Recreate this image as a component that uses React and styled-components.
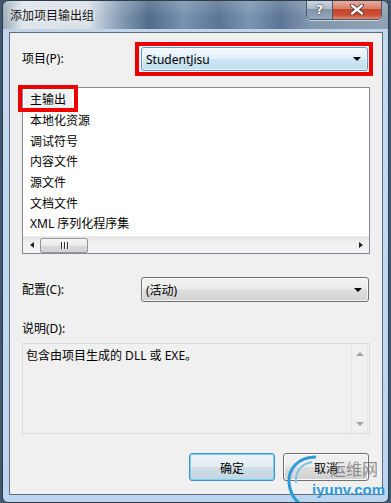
import React from "react";
import styled, { createGlobalStyle } from "styled-components";

const GlobalStyle = createGlobalStyle`
  html, body {
    margin: 0;
    padding: 0;
    background: #41576f;
  }
  body {
    font-family: "Noto Sans", "Noto Sans CJK SC", sans-serif;
    font-size: 12px;
    color: #000;
  }
  * { box-sizing: border-box; }
`;

const items = ["主输出", "本地化资源", "调试符号", "内容文件", "源文件", "文档文件", "XML 序列化程序集"];

export default function App() {
  return (
    <>
      <GlobalStyle />
      <Window>
        <TitleBar>
          <Caption>添加项目输出组</Caption>
          <CaptionButtons>
            <HelpButton>?</HelpButton>
            <CloseButton>
              <svg width="14" height="11" viewBox="0 0 14 11">
                <path d="M2 1.5 L12 9.5 M12 1.5 L2 9.5" stroke="#3a2a28" strokeWidth="4" strokeLinecap="round" />
                <path d="M2 1.5 L12 9.5 M12 1.5 L2 9.5" stroke="#fff" strokeWidth="2.4" strokeLinecap="round" />
              </svg>
            </CloseButton>
          </CaptionButtons>
        </TitleBar>

        <Client>
          <FieldRow>
            <Label $width={113}>项目(P):</Label>
            <Highlight>
              <Combo $focused>
                <span>StudentJisu</span>
                <Arrow />
              </Combo>
            </Highlight>
          </FieldRow>

          <ListBox>
            <ListItems>
              {items.map((t, i) => (
                <ListItem key={t}>
                  <ItemText $selected={i === 0}>{t}</ItemText>
                </ListItem>
              ))}
            </ListItems>
            <ItemMark />
            <HScroll>
              <ScrollArrow $dir="left" />
              <Track>
                <Thumb>
                  <Grip />
                  <Grip />
                  <Grip />
                </Thumb>
              </Track>
              <ScrollArrow $dir="right" />
            </HScroll>
          </ListBox>

          <FieldRow $top={23}>
            <Label $width={119}>配置(C):</Label>
            <Combo $wide>
              <span>(活动)</span>
              <Arrow />
            </Combo>
          </FieldRow>

          <SectionLabel>说明(D):</SectionLabel>
          <DescBox>
            <DescText>包含由项目生成的 DLL 或 EXE。</DescText>
            <VScroll>
              <SmallArrow $dir="up" />
              <SmallArrow $dir="down" />
            </VScroll>
          </DescBox>

          <ButtonRow>
            <Button $default>确定</Button>
            <Button>取消</Button>
          </ButtonRow>
        </Client>

        <Watermark>
          <svg width="34" height="52" viewBox="0 0 34 52">
            <path d="M30 4 C12 4 2 16 3 30 C4 40 9 47 14 51" fill="none" stroke="#2f9ad8" strokeWidth="3" />
            <path d="M26 9 C14 11 9 20 10 30" fill="none" stroke="#7cc3ea" strokeWidth="2" />
          </svg>
          <WmCn>运维网</WmCn>
          <WmEn>iyunv.com</WmEn>
        </Watermark>
      </Window>
    </>
  );
}

const Window = styled.div`
  position: relative;
  margin-left: 2px;
  width: 387px;
  height: 503px;
  border: 1px solid #2f3c4a;
  border-radius: 7px 7px 6px 6px;
  background: linear-gradient(180deg, #b9c7d6 0px, #c4d9ee 40px, #bcd6f2 100%);
  display: flex;
  flex-direction: column;
  overflow: hidden;
`;

const TitleBar = styled.div`
  height: 28px;
  display: flex;
  align-items: flex-start;
  background:
    linear-gradient(180deg, rgba(255, 255, 255, 0.15), rgba(255, 255, 255, 0) 60%),
    linear-gradient(90deg, #9eabb8 0%, #dfe5eb 5%, #d9e0e7 22%, #8aa0b8 30%, #506b8b 38%, #7893b1 47%, #5a7595 56%, #7a95b3 64%, #5c7696 72%, #8197ae 80%, #8fa2b5 100%);
`;

const Caption = styled.div`
  padding: 6px 0 0 7px;
  font-family: "Noto Sans CJK SC", sans-serif;
  font-size: 12px;
  line-height: 16px;
  color: #141414;
  text-shadow: 0 0 6px rgba(255, 255, 255, 0.9);
`;

const CaptionButtons = styled.div`
  margin-left: auto;
  margin-right: 6px;
  margin-top: -1px;
  display: flex;
  border: 1px solid #4b5868;
  border-top: none;
  border-radius: 0 0 5px 5px;
  overflow: hidden;
  box-shadow: 0 1px 0 rgba(255, 255, 255, 0.6);
`;

const HelpButton = styled.div`
  width: 26px;
  height: 19px;
  display: flex;
  align-items: center;
  justify-content: center;
  border-right: 1px solid #4b5868;
  background: linear-gradient(180deg, #d3dbe3 0%, #aebbc8 45%, #8095ab 50%, #93a7bb 100%);
  color: #fff;
  font-family: "DejaVu Sans", sans-serif;
  font-weight: bold;
  font-size: 13px;
  text-shadow: 0 0 1px #222, 0 0 2px #333;
`;

const CloseButton = styled.div`
  width: 48px;
  height: 19px;
  display: flex;
  align-items: center;
  justify-content: center;
  background: linear-gradient(180deg, #ebb2a3 0%, #d9806a 45%, #c2452c 50%, #cc4f35 80%, #e08c72 100%);
`;

const Client = styled.div`
  flex: 1;
  margin: 3px 5px 7px 6px;
  border: 1px solid #5f6d7c;
  background: #f0f0f0;
  padding: 9px 9px 0 12px;
  display: flex;
  flex-direction: column;
`;

const FieldRow = styled.div`
  display: flex;
  align-items: center;
  margin-top: ${(p) => p.$top || 0}px;
`;

const Label = styled.div`
  width: ${(p) => p.$width}px;
  font-family: "Noto Sans", "Noto Sans CJK SC", sans-serif;
  font-size: 12px;
  line-height: 16px;
  color: #000;
`;

const Highlight = styled.div`
  width: 238px;
  height: 34px;
  border: 4px solid #ee0000;
  padding: 1px 1px 1px 2px;
`;

const Combo = styled.div`
  width: ${(p) => (p.$wide ? 228 : 227)}px;
  height: ${(p) => (p.$wide ? 25 : 24)}px;
  border: 1px solid ${(p) => (p.$focused ? "#569dc6" : "#707070")};
  border-radius: 3px;
  display: flex;
  align-items: center;
  padding: 0 6px 0 4px;
  font-size: 12px;
  color: #000;
  background: ${(p) =>
    p.$focused
      ? "linear-gradient(180deg, #f2f9fd 0%, #e1f0f9 48%, #cde6f4 52%, #c0def0 100%)"
      : "linear-gradient(180deg, #f3f3f3 0%, #ebebeb 48%, #dedede 52%, #d2d2d2 100%)"};
  box-shadow: inset 0 0 0 1px rgba(255, 255, 255, 0.7);
  span {
    flex: 1;
  }
`;

const Arrow = styled.div`
  width: 0;
  height: 0;
  border-left: 4px solid transparent;
  border-right: 4px solid transparent;
  border-top: 4px solid #000;
`;

const ListBox = styled.div`
  position: relative;
  margin-top: 11px;
  width: 348px;
  height: 167px;
  border: 1px solid #828790;
  background: #fff;
  display: flex;
  flex-direction: column;
`;

const ListItems = styled.div`
  flex: 1;
  padding-top: 2px;
`;

const ListItem = styled.div`
  height: 20.7px;
  display: flex;
  align-items: center;
  padding-left: 1px;
`;

const ItemText = styled.span`
  padding: 1px 6px;
  font-family: "Noto Sans", "Noto Sans CJK SC", sans-serif;
  font-size: 12px;
  line-height: 16px;
  background: ${(p) => (p.$selected ? "#f0f0f0" : "transparent")};
`;

const ItemMark = styled.div`
  position: absolute;
  left: -5px;
  top: -3px;
  width: 60px;
  height: 27px;
  border: 4px solid #ee0000;
`;

const HScroll = styled.div`
  height: 17px;
  display: flex;
  align-items: center;
  background: linear-gradient(180deg, #e4e4e4 0%, #f0f0f0 30%, #f4f4f4 100%);
  border-top: 1px solid #eaeaea;
`;

const ScrollArrow = styled.div`
  width: 17px;
  height: 16px;
  display: flex;
  align-items: center;
  justify-content: center;
  &::before {
    content: "";
    width: 0;
    height: 0;
    border-top: 3.5px solid transparent;
    border-bottom: 3.5px solid transparent;
    ${(p) => (p.$dir === "left" ? "border-right: 4px solid #222;" : "border-left: 4px solid #222;")}
  }
`;

const Track = styled.div`
  flex: 1;
  height: 16px;
  display: flex;
  align-items: center;
`;

const Thumb = styled.div`
  width: 48px;
  height: 15px;
  border: 1px solid #979797;
  border-radius: 2px;
  background: linear-gradient(180deg, #f6f6f6 0%, #e9e9e9 50%, #dadada 51%, #d2d2d2 100%);
  display: flex;
  align-items: center;
  justify-content: center;
  gap: 2px;
`;

const Grip = styled.div`
  width: 1px;
  height: 7px;
  background: #2c2c2c;
  box-shadow: 1px 0 0 #fff;
`;

const SectionLabel = styled.div`
  margin-top: 19px;
  font-family: "Noto Sans", "Noto Sans CJK SC", sans-serif;
  font-size: 12px;
  line-height: 16px;
`;

const DescBox = styled.div`
  margin-top: 6px;
  width: 348px;
  height: 91px;
  border: 1px solid #d8dde2;
  background: #f0f0f0;
  display: flex;
`;

const DescText = styled.div`
  flex: 1;
  padding: 4px 3px;
  font-family: "Noto Sans", "Noto Sans CJK SC", sans-serif;
  font-size: 12px;
  line-height: 16px;
  color: #000;
`;

const VScroll = styled.div`
  width: 17px;
  margin-right: 1px;
  border-left: 1px solid #e6e6e6;
  border-right: 1px solid #e6e6e6;
  display: flex;
  flex-direction: column;
  justify-content: space-between;
  align-items: center;
  padding: 8px 0 7px;
`;

const SmallArrow = styled.div`
  width: 0;
  height: 0;
  border-left: 4px solid transparent;
  border-right: 4px solid transparent;
  ${(p) => (p.$dir === "up" ? "border-bottom: 4px solid #a3a3a3;" : "border-top: 4px solid #a3a3a3;")}
`;

const ButtonRow = styled.div`
  margin-top: 19px;
  margin-right: 4px;
  display: flex;
  justify-content: flex-end;
  gap: 8px;
`;

const Button = styled.div`
  width: 86px;
  height: 28px;
  display: flex;
  align-items: center;
  justify-content: center;
  border-radius: 3px;
  font-family: "Noto Sans CJK SC", sans-serif;
  font-size: 12px;
  color: #000;
  border: 1px solid ${(p) => (p.$default ? "#3c8fcb" : "#707070")};
  box-shadow: inset 0 0 0 1px ${(p) => (p.$default ? "#7fd2f5" : "#fbfbfb")};
  background: ${(p) =>
    p.$default
      ? "linear-gradient(180deg, #eef4f8 0%, #e3edf3 48%, #cfdee7 52%, #c3d5df 100%)"
      : "linear-gradient(180deg, #f2f2f2 0%, #ebebeb 48%, #dddddd 52%, #cfcfcf 100%)"};
`;

const Watermark = styled.div`
  position: absolute;
  left: 283px;
  top: 452px;
  width: 104px;
  height: 51px;
  pointer-events: none;
  svg {
    position: absolute;
    left: 0;
    top: 0;
  }
`;

const WmCn = styled.div`
  position: absolute;
  left: 44px;
  top: 5px;
  font-family: "Noto Sans CJK SC", sans-serif;
  font-size: 16px;
  line-height: 20px;
  color: rgba(110, 110, 110, 0.75);
`;

const WmEn = styled.div`
  position: absolute;
  left: 26px;
  top: 28px;
  font-family: "Liberation Sans", sans-serif;
  font-weight: bold;
  font-size: 15px;
  line-height: 18px;
  color: #2f9ad8;
`;
